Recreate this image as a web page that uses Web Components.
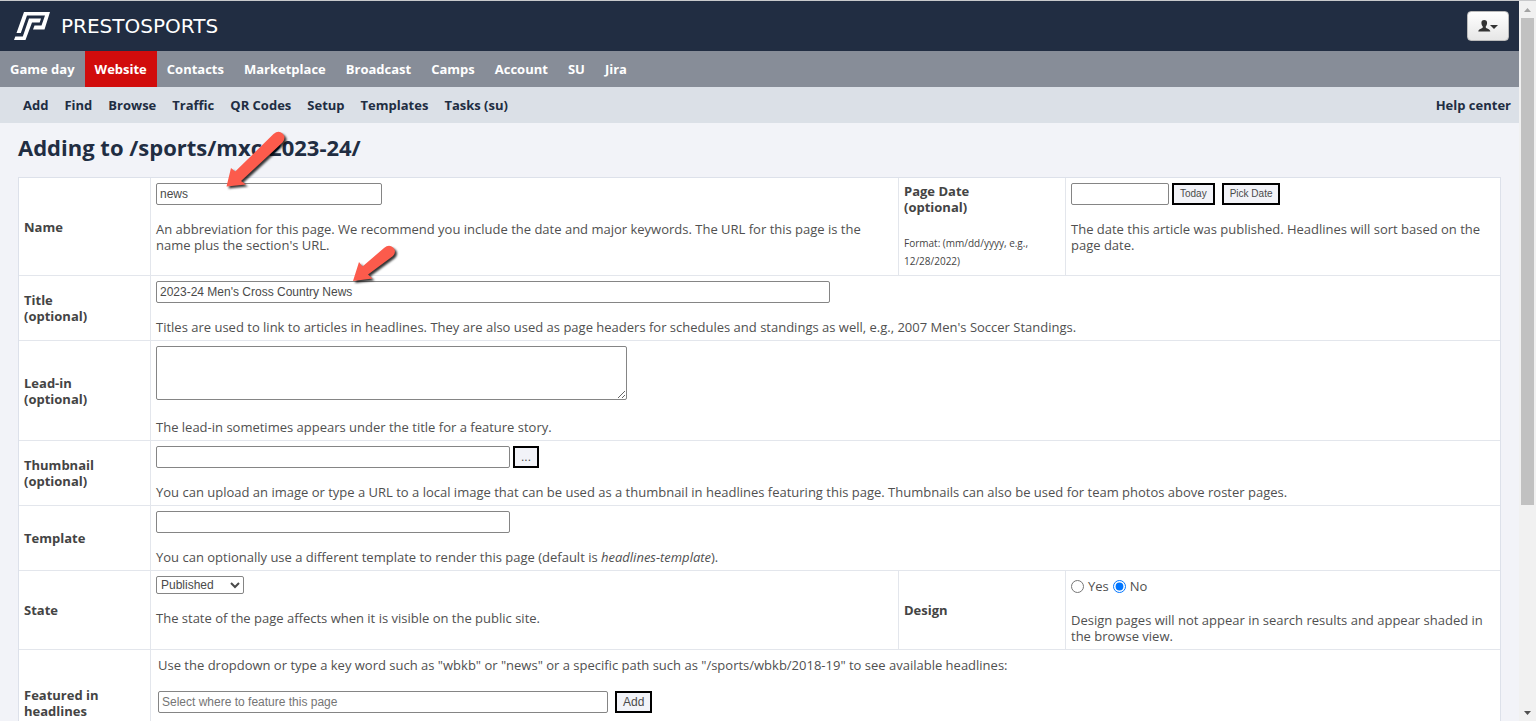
<!DOCTYPE html>
<html lang="en">
<head>
<meta charset="utf-8">
<title>PrestoSports - Add page</title>
<style>
  body {
    margin: 0;
    height: 100vh;
    overflow: hidden;
    background: #f2f3f8;
    color: #505050;
    font: 13px/16px "Open Sans", "Noto Sans", sans-serif;
  }

  h1 {
    margin: 0;
    padding: 8px 0 13px;
    color: #212d42;
    font-size: 22px;
    font-weight: 700;
    line-height: 33px;
  }

  small {
    display: block;
    margin-top: 19px;
    font-size: 10px;
    font-weight: 400;
    line-height: 18px;
  }
</style>
</head>
<body>

<page-shell>
  <site-header slot="top"></site-header>
  <main-nav slot="top"></main-nav>
  <sub-nav slot="top"></sub-nav>

  <h1>Adding to /sports/mxc-2023-24/</h1>

  <form-table>
    <form-row>
      <form-field label="Name" size="226" value="news">
        An abbreviation for this page. We recommend you include the date and major keywords. The URL for this page is the name plus the section's URL.
      </form-field>
      <form-field label="Page Date" optional size="98" top>
        <small slot="note">Format: (mm/dd/yyyy, e.g., 12/28/2022)</small>
        <form-button slot="after" small>Today</form-button>
        <form-button slot="after" small spaced>Pick Date</form-button>
        The date this article was published. Headlines will sort based on the page date.
      </form-field>
    </form-row>
    <form-row>
      <form-field label="Title" optional size="674" value="2023-24 Men's Cross Country News">
        Titles are used to link to articles in headlines. They are also used as page headers for schedules and standings as well, e.g., 2007 Men's Soccer Standings.
      </form-field>
    </form-row>
    <form-row>
      <form-field label="Lead-in" optional kind="textarea" size="471">
        The lead-in sometimes appears under the title for a feature story.
      </form-field>
    </form-row>
    <form-row>
      <form-field label="Thumbnail" optional size="354">
        <form-button slot="after">...</form-button>
        You can upload an image or type a URL to a local image that can be used as a thumbnail in headlines featuring this page. Thumbnails can also be used for team photos above roster pages.
      </form-field>
    </form-row>
    <form-row>
      <form-field label="Template" size="354">
        You can optionally use a different template to render this page (default is <em>headlines-template</em>).
      </form-field>
    </form-row>
    <form-row>
      <form-field label="State" kind="select" value="Published">
        The state of the page affects when it is visible on the public site.
      </form-field>
      <form-field label="Design" kind="radio">
        Design pages will not appear in search results and appear shaded in the browse view.
      </form-field>
    </form-row>
    <form-row>
      <form-field label="Featured in headlines" size="450" hint-first placeholder="Select where to feature this page">
        <form-button slot="after" spaced>Add</form-button>
        Use the dropdown or type a key word such as "wbkb" or "news" or a specific path such as "/sports/wbkb/2018-19" to see available headlines:
      </form-field>
    </form-row>
  </form-table>

  <callout-arrows slot="overlay"></callout-arrows>
</page-shell>

<script>
class PageShell extends HTMLElement {
  constructor() {
    super();
    this.attachShadow({ mode: 'open' });
  }

  connectedCallback() {
    this.shadowRoot.innerHTML = `
      <style>
        :host {
          display: grid;
          grid-template-columns: minmax(0, 1fr) 17px;
          height: 100vh;
          box-sizing: border-box;
          border-top: 1px solid #c8c9cb;
          position: relative;
          overflow: hidden;
        }
        .page { min-width: 0; }
        main { padding: 0 18px; }
        .scrollbar {
          display: flex;
          flex-direction: column;
          align-items: center;
          height: calc(100vh - 1px);
          background: #f1f1f1;
        }
        .scrollbar svg { display: block; flex: none; }
        .track { flex: 1; width: 13px; }
        .thumb { height: 71%; background: #c1c1c1; }
      </style>
      <div class="page">
        <slot name="top"></slot>
        <main><slot></slot></main>
      </div>
      <div class="scrollbar">
        <svg width="17" height="17" viewBox="0 0 17 17"><path d="M5 11l3.500-4 3.500 4z" fill="#a3a3a3"/></svg>
        <div class="track"><div class="thumb"></div></div>
        <svg width="17" height="17" viewBox="0 0 17 17"><path d="M5 7l3.500 4 3.500-4z" fill="#505050"/></svg>
      </div>
      <slot name="overlay"></slot>
    `;
  }
}

class SiteHeader extends HTMLElement {
  constructor() {
    super();
    this.attachShadow({ mode: 'open' });
  }

  connectedCallback() {
    this.shadowRoot.innerHTML = `
      <style>
        :host {
          display: flex;
          align-items: center;
          justify-content: space-between;
          height: 50px;
          padding: 0 10px 0 14px;
          background: #212d42;
        }
        .logo {
          display: flex;
          align-items: center;
          gap: 10px;
          color: #fff;
          font: 20px/20px "DejaVu Sans", sans-serif;
          text-decoration: none;
        }
        .user {
          display: flex;
          align-items: center;
          justify-content: center;
          width: 42px;
          height: 30px;
          padding: 0;
          border: 1px solid #bbb;
          border-radius: 4px;
          background: linear-gradient(#fff, #e6e6e6);
        }
      </style>
      <a class="logo" href="#">
        <svg width="37" height="28" viewBox="0 0 37 28" fill="#fff">
          <path d="M10 0H36L30.500 17.500H19L20.500 13.500H27.500L31 3.500H13L6.800 21H2.500z"/>
          <path d="M15 6.500H27L25.700 10.500H18L11.500 28H0L1.300 24.500H8.800z"/>
        </svg>
        <span>PRESTOSPORTS</span>
      </a>
      <button class="user" type="button" aria-label="User menu">
        <svg width="20" height="14" viewBox="0 0 20 14" fill="#333">
          <path d="M6.200 1C4.300 1 3.300 2.300 3.400 4c.1 1.500.6 2.600 1.300 3.300v1.200C4.300 9.600.5 9.800.3 12.500h12C12.100 9.800 8.200 9.600 7.800 8.500V7.300C8.500 6.600 9 5.500 9.100 4 9.200 2.300 8.100 1 6.200 1z"/>
          <path d="M12 6h8l-4 4z"/>
        </svg>
      </button>
    `;
  }
}

class MainNav extends HTMLElement {
  constructor() {
    super();
    this.attachShadow({ mode: 'open' });
  }

  connectedCallback() {
    const items = ['Game day', 'Website', 'Contacts', 'Marketplace', 'Broadcast', 'Camps', 'Account', 'SU', 'Jira'];
    this.shadowRoot.innerHTML = `
      <style>
        :host { display: block; background: #878d98; }
        nav { display: flex; }
        a {
          padding: 0 10px;
          color: #fff;
          font-weight: 700;
          line-height: 36px;
          text-decoration: none;
        }
        a.active { background: #d10c0c; }
      </style>
      <nav>
        ${items.map(item => `<a href="#" class="${item === 'Website' ? 'active' : ''}">${item}</a>`).join('')}
      </nav>
    `;
  }
}

class SubNav extends HTMLElement {
  constructor() {
    super();
    this.attachShadow({ mode: 'open' });
  }

  connectedCallback() {
    const items = ['Add', 'Find', 'Browse', 'Traffic', 'QR Codes', 'Setup', 'Templates', 'Tasks (su)'];
    this.shadowRoot.innerHTML = `
      <style>
        :host { display: block; background: #dbe0e7; }
        nav {
          display: flex;
          gap: 16px;
          padding: 0 8px 0 23px;
        }
        a {
          color: #212d42;
          font-weight: 700;
          line-height: 36px;
          text-decoration: none;
        }
        .help { margin-left: auto; }
      </style>
      <nav>
        ${items.map(item => `<a href="#">${item}</a>`).join('')}
        <a class="help" href="#">Help center</a>
      </nav>
    `;
  }
}

class FormTable extends HTMLElement {
  constructor() {
    super();
    this.attachShadow({ mode: 'open' });
  }

  connectedCallback() {
    this.shadowRoot.innerHTML = `
      <style>
        :host {
          display: block;
          border: 1px solid #dde1ea;
          background: #fff;
        }
      </style>
      <form><slot></slot></form>
    `;
  }
}

class FormRow extends HTMLElement {
  constructor() {
    super();
    this.attachShadow({ mode: 'open' });
  }

  connectedCallback() {
    this.shadowRoot.innerHTML = `
      <style>
        :host {
          display: grid;
          grid-template-columns: 131px minmax(0, 748fr) 167px minmax(0, 435fr);
          border-bottom: 1px solid #e3e6ec;
        }
        ::slotted(:only-child) { grid-column: 1 / -1; }
        ::slotted(:not(:only-child)) { grid-column: span 2; }
      </style>
      <slot></slot>
    `;
  }
}

class FormField extends HTMLElement {
  constructor() {
    super();
    this.attachShadow({ mode: 'open' });
  }

  control() {
    const value = this.getAttribute('value') || '';
    const placeholder = this.getAttribute('placeholder') || '';
    switch (this.getAttribute('kind')) {
      case 'textarea':
        return '<textarea id="control"></textarea>';
      case 'select':
        return `<select id="control"><option>${value}</option><option>Draft</option></select>`;
      case 'radio':
        return `
          <input type="radio" name="choice" id="yes"><label for="yes">Yes</label>
          <input type="radio" name="choice" id="no" checked><label for="no">No</label>`;
      default:
        return `<input class="text" type="text" id="control" value="${value}" placeholder="${placeholder}">`;
    }
  }

  render() {
    const kind = this.getAttribute('kind') || 'text';
    const name = this.getAttribute('label') + (this.hasAttribute('optional') ? '<br>(optional)' : '');
    const title = kind === 'radio' ? `<span id="title">${name}</span>` : `<label for="control">${name}</label>`;
    const group = kind === 'radio' ? 'role="radiogroup" aria-labelledby="title"' : '';

    this.shadowRoot.innerHTML = `
      <style>
        :host {
          display: grid;
          grid-template-columns: subgrid;
        }
        .title {
          display: flex;
          flex-direction: column;
          justify-content: center;
          padding: 5px;
          color: #444;
          font-weight: 700;
        }
        :host([top]) .title { justify-content: flex-start; }
        :host(:not(:first-child)) .title { border-left: 1px solid #e3e6ec; }
        .body {
          padding: 5px;
          border-left: 1px solid #e3e6ec;
        }
        :host(:only-child) .body { grid-column: 2 / -1; }
        .control {
          display: flex;
          align-items: flex-start;
          gap: 3px;
          margin-bottom: 16px;
        }
        .text, textarea, select {
          box-sizing: border-box;
          height: 22px;
          margin: 0;
          padding: 0 3px;
          border: 1px solid #858585;
          border-radius: 2px;
          background: #fff;
          color: #4a4a4a;
          font: 12px/16px "Liberation Sans", sans-serif;
        }
        .text, textarea { width: ${this.getAttribute('size') || 200}px; }
        .text::placeholder { color: #757575; }
        textarea { height: 54px; margin-bottom: 3px; }
        select { width: 88px; height: 18px; padding: 0; }
        .radio {
          align-items: center;
          height: 20px;
          gap: 4px;
        }
        .radio input { width: 13px; height: 13px; margin: 0; }
        :host([hint-first]) .body {
          display: flex;
          flex-direction: column-reverse;
          justify-content: flex-end;
          gap: 18px;
          padding: 7px 7px 22px;
        }
        :host([hint-first]) .control { margin-bottom: 0; }
        :host([hint-first]) .title { padding-bottom: 0; }
      </style>
      <div class="title">${title}<slot name="note"></slot></div>
      <div class="body">
        <div class="control ${kind === 'radio' ? 'radio' : ''}" ${group}>${this.control()}<slot name="after"></slot></div>
        <div class="hint"><slot></slot></div>
      </div>
    `;
    if (this.hasAttribute('hint-first')) {
      this.shadowRoot.querySelector('.body').style.paddingBottom = '38px';
    }
  }

  connectedCallback() {
    this.render();
  }
}

class FormButton extends HTMLElement {
  constructor() {
    super();
    this.attachShadow({ mode: 'open' });
  }

  connectedCallback() {
    this.shadowRoot.innerHTML = `
      <style>
        :host { display: block; }
        :host([spaced]) { margin-left: 4px; }
        button {
          display: block;
          height: 22px;
          padding: 0 6px;
          border: 2px solid #000;
          background: #f2f3f8;
          color: #4a4a4a;
          font: 12px/16px "Liberation Sans", sans-serif;
        }
        :host([small]) button { font-size: 10px; }
      </style>
      <button type="button"><slot></slot></button>
    `;
  }
}

class CalloutArrows extends HTMLElement {
  constructor() {
    super();
    this.attachShadow({ mode: 'open' });
  }

  connectedCallback() {
    this.shadowRoot.innerHTML = `
      <style>
        :host {
          position: absolute;
          top: 124px;
          left: 220px;
          pointer-events: none;
        }
        svg { display: block; filter: drop-shadow(2px 2px 1px rgba(0, 0, 0, .8)); }
      </style>
      <svg width="190" height="165" viewBox="220 125 190 165" fill="#fc5b4c">
        <path d="M226.500 186.500L231 168l4.200 3.500L273.500 134q5-4 9-.5 4 4 0 9L241 181l5 3.500z"/>
        <path d="M353 281l6-19 3.500 4.500L384 248q5-4 9-.5 4 3.500 0 8.500L368 274.500l4.500 4z"/>
      </svg>
    `;
  }
}

customElements.define('page-shell', PageShell);
customElements.define('site-header', SiteHeader);
customElements.define('main-nav', MainNav);
customElements.define('sub-nav', SubNav);
customElements.define('form-table', FormTable);
customElements.define('form-row', FormRow);
customElements.define('form-field', FormField);
customElements.define('form-button', FormButton);
customElements.define('callout-arrows', CalloutArrows);
</script>
</body>
</html>
